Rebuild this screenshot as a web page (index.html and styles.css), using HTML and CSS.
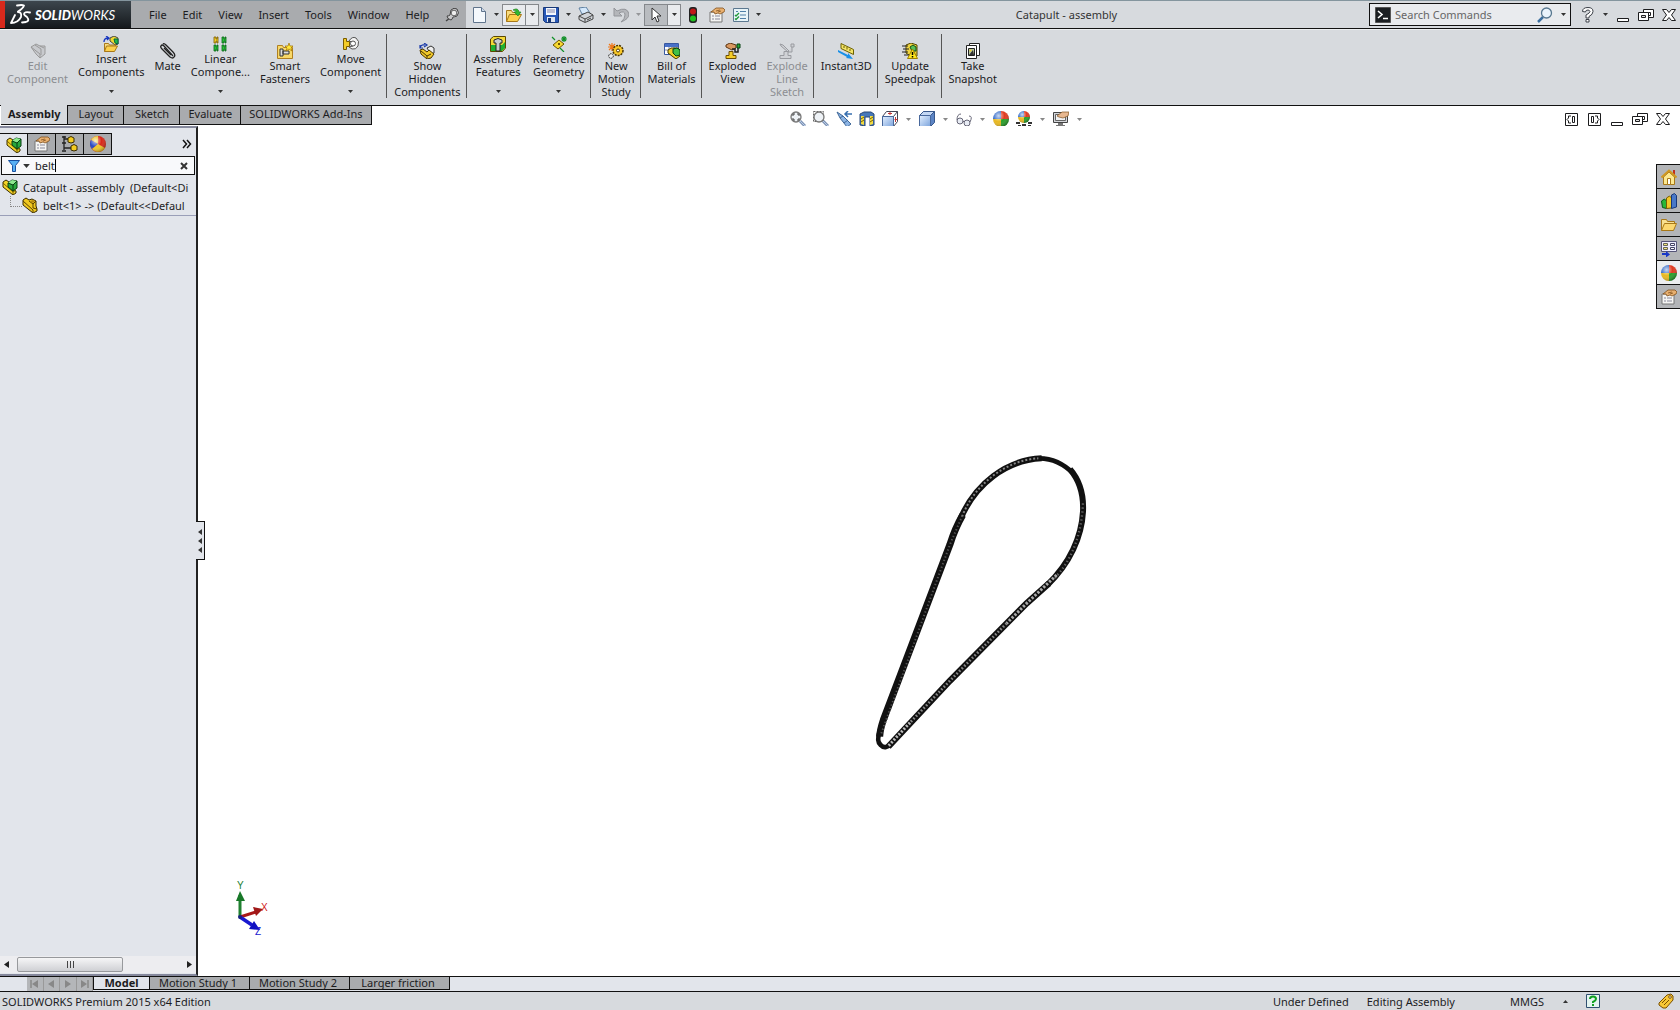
FILE: index.html
```html
<!DOCTYPE html>
<html lang="en">
<head>
    <meta charset="UTF-8">
    <meta name="viewport" content="width=device-width, initial-scale=1.0">
    <title>Catapult - assembly</title>
    <link rel="stylesheet" href="styles.css">
</head>

<body>
    <!-- Shared icons -->
    <svg class="sprite" aria-hidden="true">
        <defs>
            <radialGradient id="shine" cx="35%" cy="30%" r="75%">
                <stop offset="0" stop-color="#fff" stop-opacity=".75"/>
                <stop offset=".5" stop-color="#fff" stop-opacity="0"/>
                <stop offset="1" stop-color="#000" stop-opacity=".35"/>
            </radialGradient>
            <linearGradient id="blueface" x1="0" y1="0" x2="1" y2="1">
                <stop offset="0" stop-color="#e4f0ff"/>
                <stop offset="1" stop-color="#7ba3dc"/>
            </linearGradient>
        </defs>
        <symbol id="caret" viewBox="0 0 5 3"><path d="M0 0h5L2.500 3z"/></symbol>
        <symbol id="ball" viewBox="0 0 16 16">
            <path d="M8 8V0a8 8 0 0 0-8 8z" fill="#3068c8"/>
            <path d="M8 8V0a8 8 0 0 1 8 8z" fill="#e03a20"/>
            <path d="M8 8H0a8 8 0 0 0 8 8z" fill="#e8b820"/>
            <path d="M8 8h8a8 8 0 0 1-8 8z" fill="#28a028"/>
            <circle cx="8" cy="8" r="8" fill="url(#shine)"/>
        </symbol>
        <symbol id="asm" viewBox="0 0 16 16">
            <path d="M1 3l3-2 3 2v4l7 5v2l-3 2-10-8z" fill="#f4d428" stroke="#3a2c00"/>
            <path d="M1 4l10 9v2M11 13l3-2" fill="none" stroke="#7a6000"/>
            <path d="M6 4l4-3 5 1v7l-4 3-5-4z" fill="#28a83c" stroke="#063c10"/>
            <path d="M6 4l5 2 4-4-5-1z" fill="#8ce890"/><path d="M6 4l5 2v5M11 6l4-4" fill="none" stroke="#063c10"/>
        </symbol>
        <symbol id="part" viewBox="0 0 16 16">
            <path d="M1 3l3-2 3 2 3-1 4 2v5l1 3v2l-4 2-10-8z" fill="#f0c820" stroke="#3a2c00"/>
            <path d="M1 4l10 9v2M7 4l4 3 3-3M11 7v4l4 1" fill="none" stroke="#5c4400"/>
            <path d="M8 4l3-1 2 1-2 2z" fill="#b88a10"/>
        </symbol>
        <symbol id="props" viewBox="0 0 16 16">
            <path d="M1 5h12v10H1z" fill="#f4f4f2" stroke="#777"/>
            <path d="M3 9h2M3 12h2M6 9h5M6 12h5" stroke="#889"/>
            <path d="M2 5l5-4h7l2 2-1 2-4 2-2-1-3 1-1-2z" fill="#e8b070" stroke="#80501c" stroke-width=".8"/>
            <path d="M7 4l4-1M9 5l3-1" stroke="#80501c" stroke-width=".8"/>
        </symbol>
        <symbol id="min" viewBox="0 0 16 16"><path d="M2.500 11.500h11v3h-11z" fill="#fff" stroke="currentColor"/></symbol>
        <symbol id="restore" viewBox="0 0 16 16">
            <path d="M5.500 2.500h10v8h-10z" fill="#fff" stroke="currentColor"/><path d="M8.500 5.500h4v3h-4z" fill="none" stroke="currentColor"/>
            <path d="M.5 5.500h10v8H.5z" fill="#fff" stroke="currentColor"/><path d="M3.500 8.500h4v2h-4z" fill="#ddd" stroke="currentColor"/>
        </symbol>
        <symbol id="close" viewBox="0 0 16 16"><path d="M1.500 2.500h4L8 5.500l2.500-3h4L10.500 8l4 5.500h-4L8 10.500l-2.500 3h-4L5.500 8z" fill="#fff" stroke="currentColor"/></symbol>
        <symbol id="lens" viewBox="0 0 16 16">
            <path d="M10 10l5 5" stroke="#7d93b5" stroke-width="3"/><path d="M10 10l5 5" stroke="#b9cbe6"/>
            <circle cx="6" cy="6" r="5" fill="#eef2f6" stroke="#777" stroke-width="1.300"/>
        </symbol>
    </svg>

    <div class="app">
        <header class="titlebar">
            <div class="logo">
                <svg width="24" height="22" viewBox="0 0 24 22" fill="none" stroke="#fff" stroke-width="1.800" stroke-linecap="round" stroke-linejoin="round">
                    <path d="M8 1.500q5-1 7 0-1 3-6 6"/>
                    <path d="M9 8q4 0 3 5-3 6-10 6l4-8"/>
                    <path d="M21 8.500q-6-1-6 1.500 0 1 3 3 3 4-1 5l-4 .5"/>
                </svg>
                <span class="logo-name"><b>SOLID</b>WORKS</span>
            </div>
            <nav class="menu">
                <button>File</button>
                <button>Edit</button>
                <button>View</button>
                <button>Insert</button>
                <button>Tools</button>
                <button>Window</button>
                <button>Help</button>
                <button class="pin" aria-label="Pin menu">
                    <svg width="14" height="14" viewBox="0 0 14 14"><path d="M1 13l4-3" stroke="#444" stroke-width="1.500"/><path d="M2 8q2 0 3-1l1-5q3-3 6-1 3 4 0 7-3 1-4 1-1 3-2 3-4-1-4-4z" fill="#c8c8ca" stroke="#444"/><circle cx="9" cy="5" r="2.800" fill="#eee" stroke="#666"/></svg>
                </button>
            </nav>
            <div class="quick">
                <button class="tool" aria-label="New"><svg width="16" height="16" viewBox="0 0 16 16"><path d="M2.500.5h8l4 4v11h-12z" fill="#f4f8fc" stroke="#60748c"/><path d="M10.500.5v4h4" fill="#cfdcec" stroke="#60748c"/></svg></button>
                <button class="drop" aria-label="New options"><svg class="caret"><use href="#caret"/></svg></button>
                <button class="tool boxed" aria-label="Open"><svg width="16" height="16" viewBox="0 0 16 16"><path d="M.5 14.500v-11h5l1 2h6v3" fill="#f8dc80" stroke="#a87818"/><path d="M.5 14.500l3-7h12l-4 7z" fill="#fcd04c" stroke="#a87818"/><path d="M7 3q5-3 6 2h2l-3 4-4-4h2q0-2-3-2z" fill="#30b830" stroke="#187818" stroke-width=".6"/></svg></button>
                <button class="drop boxed" aria-label="Open options"><svg class="caret"><use href="#caret"/></svg></button>
                <button class="tool" aria-label="Save"><svg width="16" height="16" viewBox="0 0 16 16"><path d="M.5.5h15v15h-13l-2-2z" fill="#2858b8" stroke="#183878"/><path d="M3 1h10v7H3z" fill="#f4f8ff"/><path d="M4 3h8M4 5h8" stroke="#88a"/><path d="M4 10h8v5H4z" fill="#dde4f0"/><path d="M5 11h3v4H5z" fill="#183878"/></svg></button>
                <button class="drop" aria-label="Save options"><svg class="caret"><use href="#caret"/></svg></button>
                <button class="tool" aria-label="Print"><svg width="16" height="16" viewBox="0 0 16 16"><path d="M4 7L1 1l7-1 4 6z" fill="#d4e8fc" stroke="#6080a0"/><path d="M1 9l9-4 5 3v4l-8 3.500-6-3z" fill="#d0d4da" stroke="#444"/><path d="M1 9l6 3 8-4M7 12v3M9 13l4-2" stroke="#444" fill="none"/></svg></button>
                <button class="drop" aria-label="Print options"><svg class="caret"><use href="#caret"/></svg></button>
                <button class="tool" aria-label="Undo" disabled><svg width="16" height="16" viewBox="0 0 16 16"><path d="M1 1v8h8L6 6q6-3 6 2 0 4-4 7 8-3 8-8Q14-1 4 4z" fill="#b4b6ba" stroke="#93959a"/></svg></button>
                <button class="drop" aria-label="Undo options" disabled><svg class="caret"><use href="#caret"/></svg></button>
                <button class="tool boxed pressed" aria-label="Select"><svg width="16" height="16" viewBox="0 0 16 16"><path d="M4 1v12l3-3 2 5 2-1-2-5h4z" fill="#fff" stroke="#333"/></svg></button>
                <button class="drop boxed" aria-label="Select options"><svg class="caret"><use href="#caret"/></svg></button>
                <button class="tool" aria-label="Rebuild"><svg width="16" height="16" viewBox="0 0 16 16"><rect x="4" y="0" width="8" height="16" rx="3" fill="#222"/><circle cx="8" cy="4.500" r="3" fill="#c01818"/><circle cx="8" cy="11.500" r="3" fill="#20c020"/></svg></button>
                <button class="tool" aria-label="File properties"><svg width="16" height="16"><use href="#props"/></svg></button>
                <button class="tool" aria-label="Options"><svg width="16" height="16" viewBox="0 0 16 16"><path d="M.5 1.500h15v13H.5z" fill="#e8f4f8" stroke="#5c7890"/><path d="M3 4.500h2M7 4.500h6M7 8h6M7 11.500h6" stroke="#5080a8"/><path d="M2 8l1 1 3-3M2 11.500l1 1 3-3" stroke="#209838" fill="none" stroke-width="1.300"/></svg></button>
                <button class="drop" aria-label="More options"><svg class="caret"><use href="#caret"/></svg></button>
            </div>
            <h1 class="doc-title">Catapult - assembly</h1>
            <div class="search">
                <svg width="16" height="16" viewBox="0 0 16 16"><path d="M.5.500h15v15H.5z" fill="#1c1f22" stroke="#555"/><path d="M3 4l4 3.500L3 11M8 11.500h5" fill="none" stroke="#fff" stroke-width="1.600"/></svg>
                <input type="text" aria-label="Search Commands" placeholder="Search Commands">
                <button class="tool" aria-label="Search"><svg width="16" height="16" viewBox="0 0 16 16"><path d="M6 10l-5 5" stroke="#3c70a0" stroke-width="2.500"/><circle cx="9.500" cy="6" r="5" fill="#eaf4fc" stroke="#587890" stroke-width="1.300"/></svg></button>
                <button class="drop" aria-label="Search options"><svg class="caret"><use href="#caret"/></svg></button>
            </div>
            <div class="window-buttons">
                <button class="tool" aria-label="Help"><svg width="14" height="16" viewBox="0 0 14 16"><path d="M1.500 4.500q0-4 5.500-4 5 0 5 4 0 3-4 5v1.500H5V8q4-2 4-3.500Q8.500 3 7 3 4.500 3 4.500 5z M5 12.500h3v2.500H5z" fill="#fff" stroke="#3c4048"/></svg></button>
                <button class="drop" aria-label="Help options"><svg class="caret"><use href="#caret"/></svg></button>
                <button class="tool" aria-label="Minimize"><svg width="16" height="16"><use href="#min"/></svg></button>
                <button class="tool" aria-label="Restore"><svg width="16" height="16"><use href="#restore"/></svg></button>
                <button class="tool" aria-label="Close"><svg width="16" height="16"><use href="#close"/></svg></button>
            </div>
        </header>

        <div class="ribbon">
            <div class="group">
                <button class="cmd" disabled>
                    <svg width="16" height="16" viewBox="0 0 16 16"><path d="M1 4l5-3 4 2 5 0v8l-5 4-4-4z" fill="#c8cace" stroke="#999"/><path d="M1 4l9 7v4M5 2l6 4v6M10 3l4 2" fill="none" stroke="#999"/></svg>
                    <span>Edit<br>Component</span>
                </button>
                <button class="cmd has-menu">
                    <svg width="16" height="16" viewBox="0 0 16 16"><path d="M1 6q0-4 4-4M3 0l3 2-2 2" fill="none" stroke="#1838c0" stroke-width="1.300"/><path d="M7 2l4-2 4 2v6l-3 1-5-4z" fill="#f0d830" stroke="#444"/><path d="M11 3l4 0v5l-3-1z" fill="#28b848" stroke="#064"/><path d="M1.500 15.500v-8h4l1 1.500h6v2" fill="#f8dc80" stroke="#a87818"/><path d="M1.500 15.500l2-5.500h11l-3 5.500z" fill="#fcd04c" stroke="#a87818"/></svg>
                    <span>Insert<br>Components</span>
                    <svg class="caret"><use href="#caret"/></svg>
                </button>
                <button class="cmd">
                    <svg width="16" height="16" viewBox="0 0 16 16" fill="none"><g stroke="#222" stroke-width="1.300"><path d="M13 13L4 3q-2-2-3 0-1 1 1 3l8 8q3 2 4 0 2-2-1-5L6 2Q4 0 3 1"/><path d="M4 5l7 7"/></g></svg>
                    <span>Mate</span>
                </button>
                <button class="cmd has-menu">
                    <svg width="16" height="16" viewBox="0 0 16 16"><path d="M2 1h2v2h1V1h1v6H5V5H4v2H2z" fill="#f4d028" stroke="#7a5c00" stroke-width=".8"/><path d="M10 1h2v2h1V1h1v6h-1V5h-1v2h-2zM2 9h2v2h1V9h1v6H5v-2H4v2H2zM10 9h2v2h1V9h1v6h-1v-2h-1v2h-2z" fill="#28c038" stroke="#086818" stroke-width=".8"/></svg>
                    <span>Linear<br>Compone...</span>
                    <svg class="caret"><use href="#caret"/></svg>
                </button>
                <button class="cmd">
                    <svg width="16" height="16" viewBox="0 0 16 16"><path d="M.5 15.500v-13h5l1 2h9v11z" fill="#f8d868" stroke="#b08020"/><path d="M3 6h3v7H3zM6 8h6v3H6z" fill="#ddd" stroke="#333"/><path d="M12 0l1 3 3 0-2 2 1 3-3-2-3 2 1-3-2-2h3z" fill="#ffe838" stroke="#a07000" stroke-width=".7"/></svg>
                    <span>Smart<br>Fasteners</span>
                </button>
                <button class="cmd has-menu">
                    <svg width="16" height="16" viewBox="0 0 16 16"><path d="M6 5q3-5 7-3 4 3 2 8-2 4-6 3l-3-2 4-1-1-4z" fill="#f4f4f4" stroke="#555"/><circle cx="10" cy="7.500" r="2.500" fill="#fff" stroke="#555"/><path d="M.5 2.500h3v3h3v5h-3v3h-3z" fill="#f4cc28" stroke="#7a5c00"/></svg>
                    <span>Move<br>Component</span>
                    <svg class="caret"><use href="#caret"/></svg>
                </button>
            </div>
            <div class="group">
                <button class="cmd">
                    <svg width="16" height="16" viewBox="0 0 16 16"><path d="M1 5q1-4 5-3M5 0l3 2-3 2M1 2v3h3" fill="none" stroke="#1838a8" stroke-width="1.200"/><path d="M8 5l4-2 3 2v5l-3 1z" fill="#eee" stroke="#333"/><path d="M1 7l3-1 4 3 2-2 5 4-3 4-4 1-6-5z" fill="#f0c828" stroke="#4a3400"/><path d="M2 8l6 5v2M8 13l4-2" stroke="#4a3400" fill="none"/></svg>
                    <span>Show<br>Hidden<br>Components</span>
                </button>
            </div>
            <div class="group">
                <button class="cmd has-menu">
                    <svg width="16" height="16" viewBox="0 0 16 16"><path d="M.5 3l3-2.500h12V12l-3 3.500H.5z" fill="#f4d838" stroke="#5c4800"/><path d="M1 9h11l3-3v6l-3 3H1z" fill="#20b030"/><path d="M4 4q4-3 8 0v3h-2v8H6V7H4z" fill="#c8ccd0" stroke="#222"/></svg>
                    <span>Assembly<br>Features</span>
                    <svg class="caret"><use href="#caret"/></svg>
                </button>
                <button class="cmd has-menu">
                    <svg width="16" height="16" viewBox="0 0 16 16"><path d="M1 1l3 3M9 12l4 4M13 0v6M10 3h6M11 1l4 4M15 1l-4 4" stroke="#109028" stroke-width="1.200"/><path d="M2 9l6-5 5 4-6 5z" fill="#f8d830" stroke="#6c5400"/><path d="M7 7l2 2M9 7l-2 2" stroke="#6c5400"/></svg>
                    <span>Reference<br>Geometry</span>
                    <svg class="caret"><use href="#caret"/></svg>
                </button>
            </div>
            <div class="group">
                <button class="cmd">
                    <svg width="16" height="16" viewBox="0 0 16 16"><path d="M4 0v8M0 4h8M1 1l6 6M7 1L1 7" stroke="#f07818" stroke-width="1.200"/><circle cx="10" cy="7.500" r="5" fill="#f8c828" stroke="#4a3400" stroke-dasharray="2 1" stroke-width="1.500"/><circle cx="10" cy="7.500" r="1.500" fill="#fff" stroke="#4a3400"/><circle cx="3" cy="13" r="2.300" fill="#eee" stroke="#222" stroke-dasharray="1.500 .7"/></svg>
                    <span>New<br>Motion<br>Study</span>
                </button>
            </div>
            <div class="group">
                <button class="cmd">
                    <svg width="16" height="16" viewBox="0 0 16 16"><path d="M.5.500h14v11H.5z" fill="#fff" stroke="#3858a0"/><path d="M1 1h13v3H1z" fill="#4870c8"/><path d="M1 7h13M5 4v7M10 4v7" stroke="#889"/><path d="M4 7l3-2 7 0 2 3v5l-4 3-8-6z" fill="#f0d028" stroke="#443800"/><path d="M9 6l4-1 3 2v5l-4 1-3-3z" fill="#40c048" stroke="#064010"/></svg>
                    <span>Bill of<br>Materials</span>
                </button>
            </div>
            <div class="group">
                <button class="cmd">
                    <svg width="16" height="16" viewBox="0 0 16 16"><path d="M1 2l4-2 6 2v3L7 7 1 4z" fill="#d89860" stroke="#5c3410"/><path d="M1 15.500v-3h3v-4h4v4h3v3z" fill="#f4cc28" stroke="#6c4c00"/><path d="M7 6h3v3h3V5" stroke="#222" stroke-width="1.500" fill="none"/><path d="M12 1h3v4h-3z" fill="#28a838" stroke="#064010"/></svg>
                    <span>Exploded<br>View</span>
                </button>
                <button class="cmd" disabled>
                    <svg width="16" height="16" viewBox="0 0 16 16"><path d="M1 15.500v-3h4v-4h4v4h3v3zM12 1h3v3h-3zM13 4v5H9M1 1l3 1 6 6-1 1-7-6z" fill="#d0d2d6" stroke="#999ba0"/></svg>
                    <span>Explode<br>Line<br>Sketch</span>
                </button>
            </div>
            <div class="group">
                <button class="cmd">
                    <svg width="16" height="16" viewBox="0 0 16 16"><path d="M3 .5l12.500 6v5L3 5.500z" fill="#f4e468" stroke="#6c6000"/><path d="M6 3v2M9 4v2.500M12 6v2" stroke="#6c6000"/><path d="M0 7l10 5v-2l5 6-7-1 1-1L0 9z" fill="#1890e8"/></svg>
                    <span>Instant3D</span>
                </button>
            </div>
            <div class="group">
                <button class="cmd">
                    <svg width="16" height="16" viewBox="0 0 16 16"><path d="M4 2l5-2 6 2v11l-5 1-6-4z" fill="#f0d440" stroke="#554800"/><path d="M8 4l3-2 3 2v4l-4 0z" fill="#58c058" stroke="#145014"/><path d="M0 3h6M1 6h6M0 9h6M2 12h5" stroke="#222"/><path d="M10.500 6l5 9.500h-10z" fill="#ffe820" stroke="#a08000"/><path d="M10.500 9v3M10.500 13v1.500" stroke="#000" stroke-width="1.500"/></svg>
                    <span>Update<br>Speedpak</span>
                </button>
            </div>
            <div class="group">
                <button class="cmd">
                    <svg width="16" height="16" viewBox="0 0 16 16"><path d="M4.500.5h10v12h-10z" fill="#fff" stroke="#222"/><path d="M1.500 2.500h10v13h-10z" fill="#fff" stroke="#222"/><path d="M3.500 5.500h6v7h-6z" fill="#b8c8a0" stroke="#222"/><path d="M4 12l4-5 1 5z" fill="#333"/><circle cx="5.500" cy="7.500" r="1" fill="#f4d028"/></svg>
                    <span>Take<br>Snapshot</span>
                </button>
            </div>
        </div>

        <div class="strip">
            <nav class="tabs">
                <button class="tab active">Assembly</button>
                <button class="tab">Layout</button>
                <button class="tab">Sketch</button>
                <button class="tab">Evaluate</button>
                <button class="tab">SOLIDWORKS Add-Ins</button>
            </nav>
            <div class="hud">
                <button class="tool" aria-label="Zoom to fit"><svg width="16" height="16" viewBox="0 0 16 16"><use href="#lens"/><path d="M3 5V3h2M7 3h2v2M9 7v2H7M5 9H3V7" fill="none" stroke="#444"/></svg></button>
                <button class="tool" aria-label="Zoom to area"><svg width="16" height="16" viewBox="0 0 16 16"><path d="M.5.500h10v10H.5z" fill="none" stroke="#666" stroke-dasharray="2 1"/><use href="#lens"/></svg></button>
                <button class="tool" aria-label="Previous view"><svg width="16" height="16" viewBox="0 0 16 16"><path d="M1 1l3 6 7 9 4-3-8-8z" fill="#8cb4e4" stroke="#406898"/><path d="M4 7l3-2M8 12l4-3" stroke="#406898"/><path d="M16 3h-6M12 0L9 3l3 3" fill="none" stroke="#3870b0" stroke-width="1.500"/></svg></button>
                <button class="tool" aria-label="Section view"><svg width="16" height="16" viewBox="0 0 16 16"><path d="M1 3l4-2h7l3 2v11l-4 1V6H6v9l-5-1z" fill="#4878b8" stroke="#284878"/><path d="M2 5h3v9l-3-1zM11 5h3v8l-3 1z" fill="#f4dc40"/><path d="M2 8l3-2M2 11l3-2M11 8l3-2M11 11l3-2" stroke="#7a6400"/></svg></button>
                <button class="tool" aria-label="View orientation"><svg width="16" height="16" viewBox="0 0 16 16"><path d="M.5 5.500l4-5h11v10l-4 5H.5z" fill="#fff" stroke="#445"/><path d="M8 1v3M6 2.500h4M13.500 6v5M12.500 8.500h3" stroke="#c03838"/><path d="M.5 5.500h11v10H.5z" fill="url(#blueface)" stroke="#48689c"/><path d="M11.500 5.500l4-5" stroke="#445"/></svg></button>
                <button class="drop" aria-label="Orientation options"><svg class="caret"><use href="#caret"/></svg></button>
                <button class="tool" aria-label="Display style"><svg width="16" height="16" viewBox="0 0 16 16"><path d="M.5 4.500l4-4h11v11l-4 4H.5z" fill="#5c84c4" stroke="#38588c"/><path d="M.5 4.500l4-4h11l-4 4z" fill="#c4d8f4" stroke="#38588c"/><path d="M.5 4.500h11v11H.5z" fill="url(#blueface)" stroke="#48689c"/></svg></button>
                <button class="drop" aria-label="Display options"><svg class="caret"><use href="#caret"/></svg></button>
                <button class="tool" aria-label="Hide or show items"><svg width="16" height="16" viewBox="0 0 16 16" fill="#e8ecf4" stroke="#667"><path d="M1 9Q1 3 5 3M14 11q3-6-1-6" fill="none"/><circle cx="4" cy="10" r="3"/><circle cx="11" cy="12" r="3"/><path d="M7 10l1 1"/></svg></button>
                <button class="drop" aria-label="Visibility options"><svg class="caret"><use href="#caret"/></svg></button>
                <button class="tool" aria-label="Edit appearance"><svg width="16" height="16"><use href="#ball"/></svg></button>
                <button class="tool" aria-label="Apply scene"><svg width="16" height="16" viewBox="0 0 16 16"><path d="M0 12l3-3h10l3 3-3 4H3z" fill="#fff"/><path d="M0 11h4v2H0zM6 13h4v3H6zM12 11h4v2h-4zM2 14h3v2H2zM12 14h3v2h-3z" fill="#333"/><use href="#ball" x="2" width="12" height="12"/></svg></button>
                <button class="drop" aria-label="Scene options"><svg class="caret"><use href="#caret"/></svg></button>
                <button class="tool" aria-label="View settings"><svg width="16" height="16" viewBox="0 0 16 16"><path d="M.5 1.500h14v10H.5z" fill="#d4d6da" stroke="#444"/><path d="M2.500 3.500h10v6h-10z" fill="#f0f2f4" stroke="#666"/><path d="M5 12h5v2h2v2H3v-2h2z" fill="#777"/><path d="M4 5l5-4 7 0-1 4-5 2-4-1z" fill="#e8b890" stroke="#80501c" stroke-width=".7"/></svg></button>
                <button class="drop" aria-label="View setting options"><svg class="caret"><use href="#caret"/></svg></button>
            </div>
            <div class="doc-buttons">
                <button class="tool" aria-label="Expand left"><svg width="16" height="16" viewBox="0 0 16 16" fill="none" stroke="currentColor"><path d="M2.500 2.500h12v12h-12zM8 5H5.500v2L4 8.500 5.500 10v2H8M9.500 5.500h2v6h-2z"/></svg></button>
                <button class="tool" aria-label="Expand right"><svg width="16" height="16" viewBox="0 0 16 16" fill="none" stroke="currentColor"><path d="M2.500 2.500h12v12h-12zM9 5h2.500v2L13 8.500 11.500 10v2H9M5.500 5.500h2v6h-2z"/></svg></button>
                <button class="tool" aria-label="Minimize document"><svg width="16" height="16"><use href="#min"/></svg></button>
                <button class="tool" aria-label="Restore document"><svg width="16" height="16"><use href="#restore"/></svg></button>
                <button class="tool" aria-label="Close document"><svg width="16" height="16"><use href="#close"/></svg></button>
            </div>
        </div>

        <main class="main">
            <aside class="panel">
                <div class="panel-tabs">
                    <button class="panel-tab active" aria-label="Feature tree"><svg width="16" height="16"><use href="#asm"/></svg></button>
                    <button class="panel-tab" aria-label="Property manager"><svg width="16" height="16"><use href="#props"/></svg></button>
                    <button class="panel-tab" aria-label="Configurations"><svg width="16" height="16" viewBox="0 0 16 16"><path d="M2 0v14M2 3h6M2 12h7M0 1h4M0 7h4M0 15h4" stroke="#222" stroke-width="1.300"/><path d="M6 2l3-1.500L12 2v4l-3 1-3-1zM9 10l3-1.500 3 1.500v4l-3 1-3-1z" fill="#f4cc20" stroke="#3a2c00"/></svg></button>
                    <button class="panel-tab" aria-label="Display manager"><svg width="16" height="16" viewBox="0 0 16 16"><circle cx="8" cy="8" r="8" fill="#d82818"/><path d="M8 8L1 4a8 8 0 0 1 7-4z" fill="#e8c020"/><path d="M8 8L1 4a8 8 0 0 0 1 9z" fill="#2848c0"/><path d="M8 8l-6 5a8 8 0 0 0 13-1z" fill="#f0c828"/><circle cx="8" cy="8" r="8" fill="url(#shine)"/></svg></button>
                    <button class="more" aria-label="More"><svg width="10" height="10" viewBox="0 0 10 10" fill="none" stroke="#111" stroke-width="1.500"><path d="M1 1l3.500 4L1 9M5 1l3.500 4L5 9"/></svg></button>
                </div>
                <div class="filter">
                    <svg width="12" height="12" viewBox="0 0 12 12"><path d="M.5.500h11l-4 5v6h-3v-6z" fill="#58b0f4" stroke="#1850a0"/></svg>
                    <svg class="caret wide"><use href="#caret"/></svg>
                    <input type="text" aria-label="Filter tree" value="belt">
                    <button aria-label="Clear filter"><svg width="8" height="8" viewBox="0 0 8 8"><path d="M1 1l6 6M7 1L1 7" stroke="#333" stroke-width="2"/></svg></button>
                </div>
                <ul class="tree">
                    <li><svg width="16" height="16"><use href="#asm"/></svg><span>Catapult - assembly&nbsp; (Default&lt;Di</span></li>
                    <li class="child"><svg width="16" height="16"><use href="#part"/></svg><span>belt&lt;1&gt; -&gt; (Default&lt;&lt;Defaul</span></li>
                </ul>
                <div class="hscroll">
                    <svg width="5" height="7" viewBox="0 0 5 7"><path d="M5 0v7L0 3.500z" fill="#222"/></svg>
                    <div class="track"><div class="thumb"><i></i><i></i><i></i></div></div>
                    <svg width="5" height="7" viewBox="0 0 5 7"><path d="M0 0v7l5-3.500z" fill="#222"/></svg>
                </div>
            </aside>

            <section class="viewport">
                <button class="splitter" aria-label="Collapse panel">
                    <svg width="4" height="24" viewBox="0 0 4 24"><path d="M4 0v6L0 3zM4 9v6l-4-3zM4 18v6l-4-3z" fill="#333"/></svg>
                </button>
                <!-- Belt, drawn as a dark outline with the tooth pattern on top -->
                <svg class="belt" viewBox="0 0 720 960" fill="none">
                    <path d="M535 55C580 54 612 72 642 102" stroke="#111" stroke-width="14"/>
                    <path d="M630 88C662 125 671 175 669 215C665 290 630 370 562 435" stroke="#111" stroke-width="18"/>
                    <path d="M567 430L500 490L270 722L85 920" stroke="#111" stroke-width="19"/>
                    <path d="M95 911Q75 930 62 915Q48 905 60 870" stroke="#111" stroke-width="14"/>
                    <path d="M59 890Q60 870 70 840L270 313Q285 265 308 225" stroke="#111" stroke-width="21"/>
                    <path d="M300 240C345 130 440 60 545 55" stroke="#111" stroke-width="18"/>
                    <path d="M306 230C345 130 440 60 535 55" stroke="#888" stroke-width="6" stroke-dasharray="6 6"/>
                    <path d="M64 880L270 313L308 225" stroke="#555" stroke-width="6" stroke-dasharray="4 7"/>
                    <path d="M669 190C665 290 630 370 580 418" stroke="#666" stroke-width="7" stroke-dasharray="4 8"/>
                    <path d="M590 405L500 490L440 550" stroke="#aaa" stroke-width="9" stroke-dasharray="7 5"/>
                    <path d="M440 550L270 722L150 848" stroke="#888" stroke-width="8" stroke-dasharray="5 6"/>
                    <path d="M150 848L85 918" stroke="#bbb" stroke-width="9" stroke-dasharray="6 5"/>
                </svg>
                <svg class="triad" viewBox="0 0 40 60">
                    <path d="M8 38V16" stroke="#208030" stroke-width="3"/><path d="M8 12l5 10h-9z" fill="#187828"/>
                    <path d="M8 38l16-5" stroke="#a81818" stroke-width="3"/><path d="M31 30l-10-2 3 9z" fill="#a01818"/>
                    <path d="M8 38l12 8" stroke="#1818d0" stroke-width="3.500"/><path d="M28 51l-11-1 5-8z" fill="#1010c0"/>
                    <circle cx="8" cy="38" r="2" fill="#182080"/>
                    <text x="5" y="10" fill="#208030">Y</text>
                    <text x="29" y="32" fill="#d02020">X</text>
                    <text x="23" y="56" fill="#1818d0">Z</text>
                </svg>
            </section>

            <nav class="taskpane">
                <button aria-label="Resources"><svg width="16" height="16" viewBox="0 0 16 16"><path d="M12 1h2v6h-2z" fill="#c03020"/><path d="M2.500 8v7.500h11V8L8 3z" fill="#fce890" stroke="#a87818"/><path d="M.5 8.500L8 1.500l7.500 7" fill="none" stroke="#d09820" stroke-width="2"/><path d="M6.500 9.500h3v6h-3z" fill="#fff" stroke="#a87818"/></svg></button>
                <button aria-label="Design library"><svg width="16" height="16" viewBox="0 0 16 16"><path d="M.5 8l3-2 2 2v7.500l-4-1z" fill="#28b838" stroke="#085818"/><path d="M5.500 5l3-2 2 2v10l-5 .5z" fill="#f0c828" stroke="#7a5c00"/><path d="M10.500 2l3-1.500 2 2V14l-5 1.500z" fill="#4878c8" stroke="#183878"/></svg></button>
                <button aria-label="File explorer"><svg width="16" height="16" viewBox="0 0 16 16"><path d="M.5 13.500v-11h5l1 2h7v3" fill="#f8e090" stroke="#a87818"/><path d="M.5 13.500l3-7h12l-3 7z" fill="#fcd870" stroke="#a87818"/></svg></button>
                <button aria-label="View palette"><svg width="16" height="16" viewBox="0 0 16 16"><path d="M.5.500h15v10H.5z" fill="#eef" stroke="#557"/><path d="M2.500 2.500h4v2h-4zM2.500 6.500h4v2h-4z" fill="#f4e880" stroke="#665"/><path d="M9.500 2.500h4v2h-4zM9.500 6.500h4v2h-4z" fill="#fff" stroke="#446"/><path d="M1 12h4v-2l4 3.500-4 3V14H1z" fill="#1838c8"/></svg></button>
                <button class="active" aria-label="Appearances"><svg width="16" height="16"><use href="#ball"/></svg></button>
                <button aria-label="Custom properties"><svg width="16" height="16"><use href="#props"/></svg></button>
            </nav>
        </main>

        <div class="sheets">
            <div class="pager">
                <button aria-label="First" disabled><svg width="9" height="10" viewBox="0 0 9 10"><path d="M1 1v8" stroke="#888" stroke-width="1.500"/><path d="M8 1v8L2 5z" fill="#888"/></svg></button>
                <button aria-label="Previous" disabled><svg width="9" height="10" viewBox="0 0 9 10"><path d="M7 1v8L1 5z" fill="#888"/></svg></button>
                <button aria-label="Next" disabled><svg width="9" height="10" viewBox="0 0 9 10"><path d="M2 1v8l6-4z" fill="#888"/></svg></button>
                <button aria-label="Last" disabled><svg width="9" height="10" viewBox="0 0 9 10"><path d="M8 1v8" stroke="#888" stroke-width="1.500"/><path d="M1 1v8l6-4z" fill="#888"/></svg></button>
            </div>
            <button class="sheet active">Model</button>
            <button class="sheet">Motion Study 1</button>
            <button class="sheet">Motion Study 2</button>
            <button class="sheet">Larger friction</button>
        </div>

        <footer class="status">
            <span class="edition">SOLIDWORKS Premium 2015 x64 Edition</span>
            <span class="state">Under Defined</span>
            <span class="mode">Editing Assembly</span>
            <button class="units">MMGS <svg class="caret up"><use href="#caret"/></svg></button>
            <button class="help" aria-label="Help"><svg width="14" height="14" viewBox="0 0 14 14"><path d="M.5.500h13v13H.5z" fill="#e4f4f0" stroke="#305070"/><path d="M4 5q0-2.500 3-2.500T10 5q0 1.500-3 3v1M7 10v2" fill="none" stroke="#10a020" stroke-width="2"/></svg></button>
            <button class="tag" aria-label="Tags"><svg width="16" height="16" viewBox="0 0 16 16"><path d="M1 10L9 2l4-1 2 2v4l-7 8H5l-4-3z" fill="#f8c838" stroke="#7a5000"/><circle cx="12" cy="4" r="1.300" fill="#fff" stroke="#7a5000"/><path d="M4 10l4-4M6 12l5-5" stroke="#7a5000"/></svg></button>
        </footer>
    </div>
</body>

</html>
```
FILE: styles.css
```css
/* Presets and utilities */
* {
    box-sizing: border-box;
}

html,
body {
    margin: 0;
    height: 100%;
    overflow: hidden;
}

body,
button,
input {
    font-family: 'Noto Sans', 'Open Sans', sans-serif;
    font-size: 11px;
    line-height: 13px;
    color: #1c1c1e;
}

button {
    margin: 0;
    padding: 0;
    border: 0;
    background: none;
    white-space: nowrap;
}

svg {
    display: block;
    flex: none;
}

.sprite {
    position: absolute;
    width: 0;
    height: 0;
}

.caret {
    width: 5px;
    height: 3px;
    fill: #333;
}

.caret.wide {
    width: 7px;
    height: 4px;
}

.caret.up {
    transform: rotate(180deg);
}

.app {
    display: flex;
    flex-direction: column;
    height: 100vh;
    background: #d7dade;
}

.tool,
.drop {
    display: flex;
    align-items: center;
    justify-content: center;
    height: 22px;
}

.tool {
    width: 24px;
}

.drop {
    width: 12px;
}

/* Title bar */
.titlebar {
    display: flex;
    align-items: center;
    height: 29px;
    border-top: 1px solid #84959e;
    border-bottom: 1px solid #111;
    background: #d7dade;
}

.logo {
    display: flex;
    align-items: center;
    gap: 2px;
    align-self: stretch;
    width: 131px;
    padding-left: 4px;
    border-left: 5px solid #d8291c;
    background: linear-gradient(#3d464d, #15191c);
    color: #fff;
}

.logo-name {
    font-family: Lato, sans-serif;
    font-size: 13px;
    line-height: 16px;
    font-style: italic;
}

.logo-name b {
    font-weight: 900;
}

.menu {
    display: flex;
    align-items: center;
    align-self: stretch;
    gap: 16px;
    width: 335px;
    padding-left: 18px;
    background: #a9abae;
}

.quick {
    display: flex;
    align-items: center;
    padding-left: 1px;
}

.quick .drop {
    width: 11px;
}

.boxed {
    border: 1px solid #85888c;
    background: #e9ebee;
}

.quick .drop.boxed {
    width: 13px;
    border-left: 0;
}

.pressed {
    background: #b9bcc0;
}

.quick .drop:disabled {
    opacity: .4;
}

.doc-title {
    flex: 1;
    margin: 0;
    font-size: 11px;
    font-weight: 400;
    text-align: center;
    color: #333;
}

.search {
    display: flex;
    align-items: center;
    gap: 4px;
    width: 202px;
    height: 23px;
    padding-left: 5px;
    border: 1px solid #111;
    background: #e9ebee;
}

.search input {
    flex: 1;
    min-width: 0;
    padding: 0;
    border: 0;
    background: none;
}

.search input::placeholder {
    color: #666;
}

.search .tool {
    margin-right: -4px;
}

.search .drop {
    margin-right: 1px;
}

.window-buttons {
    display: flex;
    align-items: center;
    padding-left: 5px;
    color: #44474d;
}

.window-buttons .tool {
    width: 23px;
}

/* Ribbon */
.ribbon {
    display: flex;
    height: 77px;
    padding: 4px 0 7px;
    border-top: 1px solid #eceef0;
    border-bottom: 1px solid #111;
}

.group {
    display: flex;
    padding-left: 2px;
}

.group + .group {
    border-left: 1px solid #555;
}

.cmd {
    display: flex;
    flex-direction: column;
    align-items: center;
    padding: 9px 5px 0;
    text-align: center;
}

.cmd.has-menu {
    padding-top: 2px;
}

.cmd .caret {
    margin-top: 12px;
}

.cmd:disabled {
    color: #8c8e92;
}

/* Command tabs and view toolbar */
.strip {
    display: flex;
    height: 20px;
    background: #fff;
}

.tabs {
    display: flex;
    align-items: flex-start;
    padding-left: 1px;
}

.tab {
    min-width: 56px;
    height: 19px;
    padding: 0 8px 3px;
    border: solid #111;
    border-width: 0 1px 1px 0;
    background: #a9abae;
}

.tab.active {
    height: 20px;
    padding: 0 7px 3px;
    margin-top: -1px;
    font-weight: 700;
    background: #d7dade;
}

.hud {
    display: flex;
    padding: 2px 58px 0 0;
    margin: 0 auto;
}

.hud .tool {
    width: 23px;
}

.hud .drop {
    width: 14px;
}

.hud .caret {
    fill: #888;
}

.doc-buttons {
    display: flex;
    padding: 2px 6px 0 0;
    color: #777;
}

.doc-buttons .tool {
    width: 23px;
}

/* Feature tree */
.main {
    display: flex;
    flex: 1;
    min-height: 0;
    background: #fff;
    border-bottom: 1px solid #111;
}

.panel {
    display: flex;
    flex-direction: column;
    width: 198px;
    border-top: 2px solid #85889c;
    border-right: 2px solid #222;
    border-bottom: 2px solid #85889c;
    background: #e2e5eb;
}

.panel-tabs {
    display: flex;
    height: 27px;
    padding-top: 5px;
}

.panel-tab {
    display: flex;
    align-items: center;
    justify-content: center;
    width: 28px;
    border: solid #111;
    border-width: 1px 1px 1px 0;
    background: #a9abae;
}

.panel-tab.active {
    border-bottom: 0;
    background: #e2e5eb;
}

.more {
    display: flex;
    align-items: center;
    margin: 0 4px 0 auto;
}

.filter {
    display: flex;
    align-items: center;
    gap: 3px;
    height: 19px;
    margin: 1px;
    padding: 0 6px;
    border: 1px solid #111;
    background: #f8f9fb;
}

.filter input {
    field-sizing: content;
    height: 13px;
    padding: 0;
    margin-left: 2px;
    border: 0;
    border-right: 1px solid #000;
    background: none;
}

.filter button {
    margin-left: auto;
}

.tree {
    margin: 0;
    padding: 2px 0 1px;
    list-style: none;
    border-bottom: 1px solid #9a9fb8;
}

.tree li {
    display: flex;
    align-items: center;
    gap: 5px;
    height: 18px;
    padding-left: 2px;
    white-space: nowrap;
}

.tree .child::before {
    content: '';
    width: 11px;
    height: 10px;
    margin: 0 -5px 8px 8px;
    flex: none;
    border-left: 1px dotted #888;
    border-bottom: 1px dotted #888;
}

.hscroll {
    display: flex;
    align-items: center;
    gap: 10px;
    height: 17px;
    margin: auto 0 1px;
    padding: 0 4px;
    background: #ededf0;
}

.track {
    flex: 1;
}

.thumb {
    display: flex;
    align-items: center;
    justify-content: center;
    gap: 2px;
    width: 106px;
    height: 15px;
    margin-left: -2px;
    border: 1px solid #97999c;
    border-radius: 2px;
    background: linear-gradient(#f6f6f7, #cfd0d4);
}

.thumb i {
    width: 1px;
    height: 7px;
    background: #444;
}

/* Graphics area */
.viewport {
    position: relative;
    flex: 1;
}

.splitter {
    position: absolute;
    left: -2px;
    top: 395px;
    display: flex;
    align-items: center;
    width: 9px;
    height: 39px;
    padding-left: 2px;
    border: 1px solid #111;
    border-left: 0;
    background: #e2e5eb;
}

.belt {
    position: absolute;
    left: 662px;
    top: 314px;
    width: 240px;
    height: 320px;
}

.triad {
    position: absolute;
    left: 34px;
    top: 753px;
    width: 40px;
    height: 60px;
    font: 10px 'Liberation Sans', sans-serif;
}

.taskpane {
    display: flex;
    flex-direction: column;
    align-self: flex-start;
    width: 24px;
    margin-top: 38px;
    border: 1px solid #111;
    border-width: 1px 0 0 1px;
}

.taskpane button {
    display: flex;
    align-items: center;
    justify-content: center;
    height: 24px;
    border-bottom: 1px solid #111;
    background: #b3b5b8;
}

.taskpane .active {
    background: #eceef0;
}

/* Bottom tabs */
.sheets {
    display: flex;
    height: 15px;
    padding-left: 27px;
    border-bottom: 1px solid #111;
    background: #e2e5eb;
}

.pager {
    display: flex;
    width: 66px;
    background: #b4b6b9;
}

.pager button {
    display: flex;
    flex: 1;
    align-items: center;
    justify-content: center;
    border-right: 1px solid #999;
}

.sheet {
    width: 100px;
    height: 13px;
    padding-right: 3px;
    line-height: 10px;
    border: solid #111;
    border-width: 0 1px 1px 0;
    background: #a9abae;
}

.sheet.active {
    width: 57px;
    padding-right: 0;
    border-left-width: 1px;
    font-weight: 700;
    background: #e2e5eb;
}

/* Status bar */
.status {
    display: flex;
    align-items: center;
    height: 18px;
    padding: 0 6px 0 2px;
}

.edition {
    margin-right: auto;
}

.state {
    margin-right: 18px;
}

.mode {
    margin-right: 55px;
}

.units {
    display: flex;
    align-items: center;
    gap: 19px;
    margin-right: 18px;
}

.help {
    margin-right: 58px;
}
```
